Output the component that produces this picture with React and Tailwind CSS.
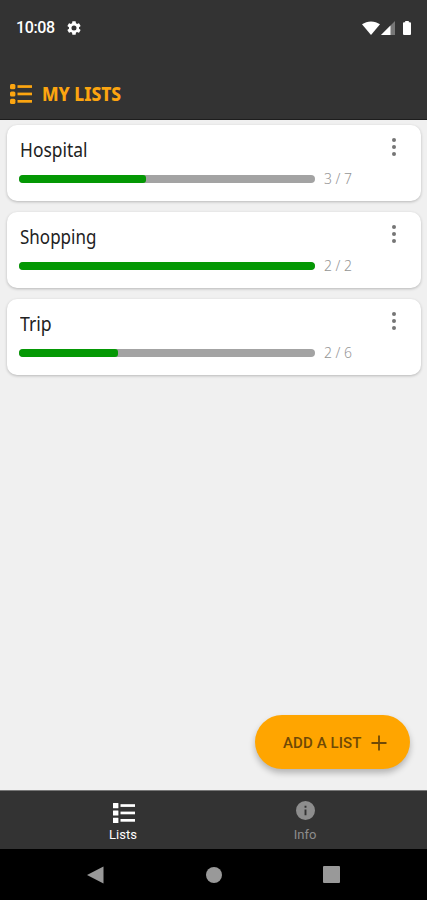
import React from 'react';

const lists = [
  { id: 1, name: 'Hospital', done: 3, total: 7, nameStyle: 'scale-x-[0.915]' },
  { id: 2, name: 'Shopping', done: 2, total: 2, nameStyle: 'scale-x-[0.895]' },
  { id: 3, name: 'Trip', done: 2, total: 6, nameStyle: 'scale-x-[0.93]' },
];

const ListIcon = ({ className, rounded }) => (
  <svg viewBox="0 0 22 20" fill="currentColor" className={className}>
    {[0, 7.4, 14.8].map((y) => (
      <g key={y}>
        <rect x="0" y={y} width="5.4" height="5.2" rx={rounded ? 1.5 : 0.3} />
        <rect x="7.5" y={y + 1.2} width="14.5" height="2.7" />
      </g>
    ))}
  </svg>
);

const StatusBar = () => (
  <div className="flex h-[54px] items-center pl-4 pr-[15px] pt-[1px] text-white">
    <span className="mt-[1px] w-[38px] text-[16px] font-medium leading-none tracking-[-0.4px]">10:08</span>
    <svg viewBox="2 2 20 20" fill="currentColor" className="ml-[13px] h-[14px] w-[14px]">
      <path d="M19.14 12.94c.04-.3.06-.61.06-.94 0-.32-.02-.64-.07-.94l2.03-1.58a.49.49 0 0 0 .12-.61l-1.92-3.32a.49.49 0 0 0-.59-.22l-2.39.96c-.5-.38-1.03-.7-1.62-.94l-.36-2.54a.48.48 0 0 0-.48-.41h-3.84a.47.47 0 0 0-.47.41l-.36 2.54c-.59.24-1.13.57-1.62.94l-2.39-.96a.48.48 0 0 0-.59.22L2.74 8.87a.47.47 0 0 0 .12.61l2.03 1.58c-.05.3-.09.63-.09.94s.02.64.07.94l-2.03 1.58a.49.49 0 0 0-.12.61l1.92 3.32c.12.22.37.29.59.22l2.39-.96c.5.38 1.03.7 1.62.94l.36 2.54c.05.24.24.41.48.41h3.84c.24 0 .44-.17.47-.41l.36-2.54c.59-.24 1.13-.56 1.62-.94l2.39.96c.22.08.47 0 .59-.22l1.92-3.32a.47.47 0 0 0-.12-.61l-2.01-1.58zM12 15.6A3.6 3.6 0 1 1 12 8.4a3.6 3.6 0 0 1 0 7.2z" />
    </svg>
    <div className="ml-auto flex items-center">
      <svg viewBox="0 0 18 14" className="h-[14px] w-[18px]">
        <path d="M9 14 0 3.3C5 -.6 13 -.6 18 3.3z" fill="#fff" />
      </svg>
      <svg viewBox="0 0 14 14" className="ml-[1px] h-[14px] w-[14px]">
        <path d="M14 0v14H0z" fill="#777" />
        <path d="M9.5 4.5V14H0z" fill="#fff" />
      </svg>
      <svg viewBox="0 0 8 14" className="ml-[8px] mr-[1px] h-[14px] w-2">
        <path d="M2.2 0h3.6v1.2H7a1 1 0 0 1 1 1V13a1 1 0 0 1-1 1H1a1 1 0 0 1-1-1V2.2a1 1 0 0 1 1-1h1.2z" fill="#fff" />
      </svg>
    </div>
  </div>
);

const ListCard = ({ list }) => (
  <div className="flex h-[76px] justify-between rounded-[10px] bg-white pl-3 pr-[25px] shadow-[0_1px_3px_rgba(0,0,0,0.24)]">
    <div>
      <p className={`ml-[1px] mt-[13px] h-6 origin-left font-['Noto_Sans'] text-[19px] leading-6 text-[#222] ${list.nameStyle}`}>
        {list.name}
      </p>
      <div className="mt-[9px] flex h-4 items-center">
        <div className="h-2 w-[296px] overflow-hidden rounded-full bg-[#a3a3a3]">
          <div
            className="h-full rounded-r-[3px] bg-[#049804]"
            style={{ width: `${(list.done / list.total) * 100}%` }}
          />
        </div>
        <span className="-mt-[2px] ml-[9px] origin-left scale-x-[0.93] whitespace-nowrap font-['Noto_Sans'] text-[15px] font-light leading-4 text-[#959595]">
          {list.done} / {list.total}
        </span>
      </div>
    </div>
    <svg viewBox="0 0 4 18" fill="#757575" className="mt-[13px] h-[18px] w-1">
      <circle cx="2" cy="2" r="2" />
      <circle cx="2" cy="9" r="2" />
      <circle cx="2" cy="16" r="2" />
    </svg>
  </div>
);

const App = () => {
  return (
    <div className="flex h-[900px] w-[427px] flex-col overflow-hidden bg-[#f0f0f0] font-['Roboto',sans-serif]">
      <header className="h-[120px] shrink-0 border-b border-[#1d1d1d] bg-[#333333]">
        <StatusBar />
        <div className="flex h-[80px] items-center pl-[10px] text-[#fca510]">
          <ListIcon className="h-5 w-[22px]" rounded />
          <h1 className="ml-[10px] origin-left scale-x-[0.87] whitespace-nowrap font-['Noto_Sans'] text-[20px] font-extrabold leading-none">
            MY LISTS
          </h1>
        </div>
      </header>

      <main className="flex flex-1 flex-col gap-[11px] pl-[7px] pr-[6px] pt-[5px]">
        {lists.map((list) => (
          <ListCard key={list.id} list={list} />
        ))}
        <button className="mb-[21px] mr-[11px] mt-auto flex h-[54px] w-[155px] items-center self-end rounded-full bg-[#ffa500] pl-7 pt-[1px] text-[#6f4906] shadow-[0_4px_6px_rgba(0,0,0,0.25)]">
          <span className="mt-[1px] w-[79px] whitespace-nowrap text-left text-[15px] font-medium leading-none tracking-[0.1px]">ADD A LIST</span>
          <svg viewBox="0 0 16 16" stroke="currentColor" strokeWidth="1.8" className="ml-[9px] h-4 w-4">
            <path d="M8 .5v15M.5 8h15" />
          </svg>
        </button>
      </main>

      <nav className="flex h-[59px] shrink-0 justify-center border-t border-[#777] bg-[#333333] text-[13px] leading-none">
        <div className="flex w-[183px] flex-col items-center pl-[2px] pt-3 text-white">
          <ListIcon className="ml-[1px] h-5 w-[22px]" />
          <span className="mt-[5px]">Lists</span>
        </div>
        <div className="flex w-[183px] flex-col items-center pt-[10px] text-[#8d8d8d]">
          <svg viewBox="2 2 20 20" fill="currentColor" className="h-[19px] w-[19px]">
            <path d="M12 2a10 10 0 1 0 0 20 10 10 0 0 0 0-20zm1 15h-2v-6h2v6zm0-8h-2V7h2v2z" />
          </svg>
          <span className="mt-2">Info</span>
        </div>
      </nav>

      <div className="flex h-[51px] shrink-0 items-center bg-black pl-[87px] text-[#999]">
        <svg viewBox="0 0 17 18" fill="currentColor" className="h-[18px] w-[17px]">
          <path d="M16.5 .5v17L0 9z" />
        </svg>
        <div className="ml-[102px] h-4 w-4 rounded-full bg-[#999]" />
        <div className="ml-[101px] h-[17px] w-[17px] rounded-[1px] bg-[#999]" />
      </div>
    </div>
  );
};

export default App;
